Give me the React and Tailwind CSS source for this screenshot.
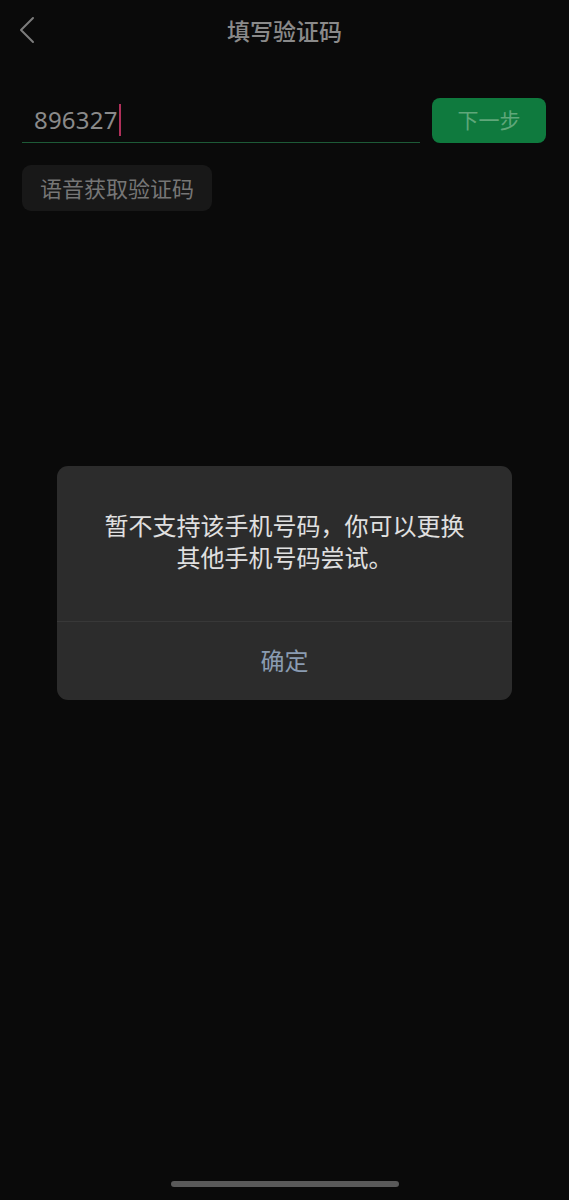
const font = { fontFamily: '"Noto Sans", "Noto Sans CJK SC", sans-serif' };

export default function App() {
  return (
    <div className="min-h-[1200px] w-full bg-[#0a0a0a] flex flex-col" style={font}>
      {/* Header */}
      <div className="relative h-[62px] flex items-center justify-center">
        <svg className="absolute left-[16px] top-[15px]" width="22" height="30" viewBox="0 0 22 30" fill="none">
          <polyline points="17,3 5,15 17,27" stroke="#7c7c7c" strokeWidth="2" strokeLinecap="round" strokeLinejoin="round" />
        </svg>
        <span className="text-[23px] text-[#8a8a8a] font-medium">填写验证码</span>
      </div>

      {/* Code input row */}
      <div className="flex items-end px-[22px] mt-[36px] gap-[12px]">
        <div className="flex-1 h-[45px] border-b border-[#1d5a37] flex items-center pl-[12px]">
          <span className="text-[24px] text-[#8a8a8a] leading-none tracking-[0.2px]">896327</span>
          <span className="w-[2px] h-[32px] bg-[#b0305a] ml-[1px]"></span>
        </div>
        <button className="w-[114px] h-[45px] rounded-[8px] bg-[#0f7a3e] text-[21px] text-[#5fa77a] mr-[1px]">
          下一步
        </button>
      </div>

      <div className="px-[22px] mt-[22px]">
        <div className="inline-flex items-center h-[46px] px-[18px] rounded-[9px] bg-[#181818] text-[22px] text-[#767676]">
          语音获取验证码
        </div>
      </div>

      {/* Dialog */}
      <div className="mt-[255px] mx-[57px] rounded-[11px] bg-[#2c2c2c] flex flex-col">
        <div className="h-[155px] flex items-center justify-center text-center px-[20px] pb-[4px]">
          <p className="text-[24px] leading-[32px] text-[#e0e0e0]">
            暂不支持该手机号码，你可以更换
            <br />
            其他手机号码尝试。
          </p>
        </div>
        <div className="h-px bg-[#383838]"></div>
        <div className="h-[78px] flex items-center justify-center text-[24px] text-[#8a9cb2]">
          确定
        </div>
      </div>

      <div className="flex-1"></div>
      <div className="flex justify-center pb-[13px]">
        <div className="w-[228px] h-[6px] rounded-full bg-[#5a5a5a]"></div>
      </div>
    </div>
  );
}
